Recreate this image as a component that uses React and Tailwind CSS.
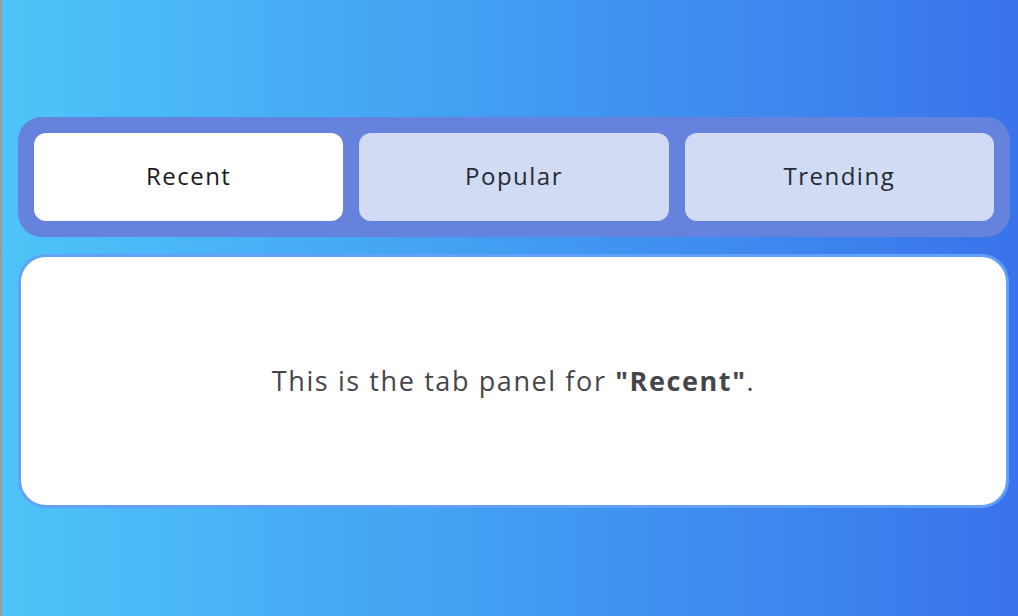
import React, { useState } from 'react';

const TABS = ['Recent', 'Popular', 'Trending'];

export default function App() {
  const [active, setActive] = useState('Recent');

  return (
    <div className="flex h-[616px] w-[1018px] overflow-hidden" style={{ fontFamily: '"Open Sans", sans-serif' }}>
      <div className="w-[2px] shrink-0 bg-[#9a9a9a]" />
      <div className="flex-1 bg-gradient-to-r from-[#4fc4f8] to-[#3a73eb] pl-4 pt-[117px]">
        {/* Tab list */}
        <div className="flex w-[992px] gap-4 rounded-[24px] bg-[#6583dc] p-4">
          {TABS.map(t => (
            <button
              key={t}
              onClick={() => setActive(t)}
              className={`h-[88px] flex-1 rounded-xl pb-0.5 text-[24px] tracking-[1.5px] ${
                active === t ? 'bg-white text-[#1a1a1a]' : 'bg-[#d1dbf4] text-[#262a33]'
              }`}
            >
              {t}
            </button>
          ))}
        </div>

        {/* Panel */}
        <div className="mt-[17px] flex h-[254px] w-[991px] items-center justify-center rounded-[28px] border-[3px] border-[#63a0fa] bg-white">
          <p className="text-[27px] tracking-[1.6px] text-[#45464c]">
            This is the tab panel for <strong className="font-bold">"{active}"</strong>.
          </p>
        </div>
      </div>
    </div>
  );
}
